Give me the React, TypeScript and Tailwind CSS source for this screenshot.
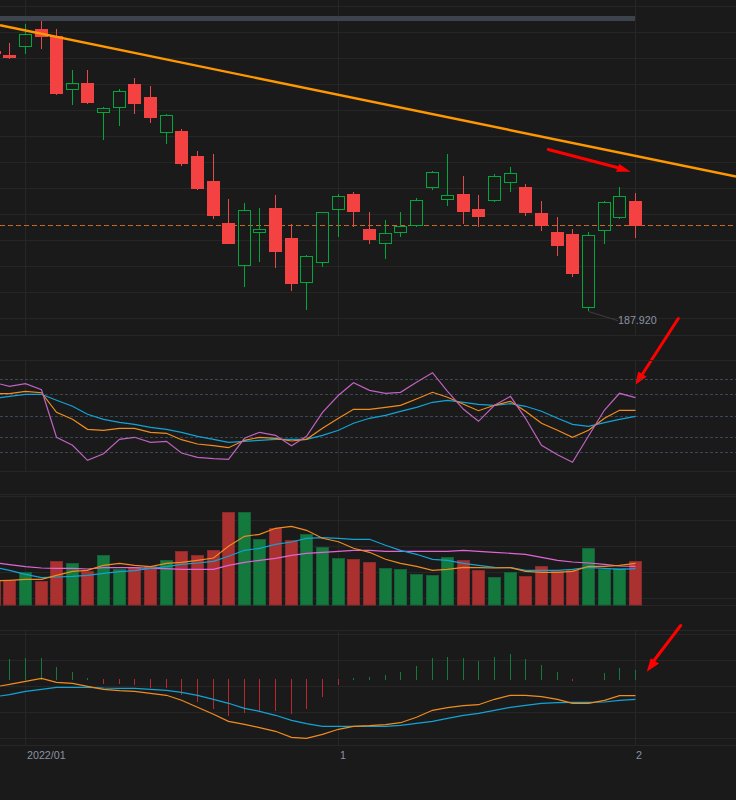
const snap = (v: number) => Math.floor(v) + 0.5;

const XS = [
  -5.3, 9.3, 25.3, 41.3, 56.3, 72.3, 87.3, 103.3, 119.3, 134.3, 150.3, 166.3, 181.3, 197.3, 213.3, 228.3, 244.3, 259.3, 275.3, 291.3, 306.3,
  322.3, 338.3, 353.3, 369.3, 385.3, 400.3, 416.3, 432.3, 447.3, 463.3, 478.3, 494.3, 510.3, 525.3, 541.3, 557.3, 572.3, 588.3, 604.3, 619.3, 635.3,
].map(snap);

// x, wickTop, wickBottom, bodyTop, bodyBottom, up (page px)
const CANDLES: [number, number, number, number, number, boolean][] = [
  [-5.3, 47, 58, 51, 54, false],
  [9.3, 43, 59, 55, 58, false],
  [25.3, 24, 54, 34.3, 46.7, true],
  [41.3, 20, 49, 29, 37, false],
  [56.3, 29, 95, 36, 94, false],
  [72.3, 70, 105, 83.3, 89.7, true],
  [87.3, 70, 104, 83, 103, false],
  [103.3, 107, 140, 108.3, 112.7, true],
  [119.3, 89, 126, 91.3, 107.7, true],
  [134.3, 78, 114, 84, 104, false],
  [150.3, 86, 123, 97, 118, false],
  [166.3, 114, 144, 115.3, 132.7, true],
  [181.3, 129, 166, 131, 164, false],
  [197.3, 151, 190, 156, 189, false],
  [213.3, 154, 219, 181, 216, false],
  [228.3, 199, 244, 223, 244, false],
  [244.3, 203, 287, 210.3, 265.7, true],
  [259.3, 208, 262, 229.3, 232.7, true],
  [275.3, 195, 268, 208, 252, false],
  [291.3, 224, 291, 238, 284, false],
  [306.3, 255, 310, 256.3, 282.7, true],
  [322.3, 212, 267, 212.3, 262.7, true],
  [338.3, 194, 237, 196.3, 209.7, true],
  [353.3, 192, 227, 194, 212, false],
  [369.3, 212, 244, 229, 240, false],
  [385.3, 220, 259, 233.3, 243.7, true],
  [400.3, 212, 237, 226.3, 232.7, true],
  [416.3, 198, 227, 200.3, 225.7, true],
  [432.3, 171, 190, 172.3, 187.7, true],
  [447.3, 154, 206, 195.3, 199.7, true],
  [463.3, 176, 224, 194, 212, false],
  [478.3, 195, 227, 209, 217, false],
  [494.3, 174, 202, 176.3, 200.7, true],
  [510.3, 167, 192, 173.3, 182.7, true],
  [525.3, 184, 216, 187, 213, false],
  [541.3, 201, 231, 213, 226, false],
  [557.3, 217, 256, 232, 246, false],
  [572.3, 229, 277, 234, 274, false],
  [588.3, 232, 311, 235.3, 307.7, true],
  [604.3, 201, 244, 202.3, 230.7, true],
  [619.3, 187, 219, 196.3, 217.7, true],
  [635.3, 193, 238, 201, 226, false],
];

const MAIN_GRID = [6.5, 32.5, 58.5, 84.5, 110.5, 136.5, 162.5, 188.5, 214.5, 240.5, 266.5, 292.5, 318.5, 335.5];

// y values for the panels, one per candle from XS index 1
const OSC_PURPLE = [386.3, 383.7, 389.7, 437.3, 445.3, 460.3, 453.7, 439.3, 437.3, 442.3, 441.3, 453, 457.3, 458.7, 459.3, 438.3, 432.3, 435.3, 445.7, 436.3, 412.3, 395.3, 382.7, 390.3, 393.3, 392.3, 382.3, 372.7, 391.3, 409.3, 421.3, 405.3, 396.3, 418.3, 445.3, 454.7, 462.3, 436, 410, 393.3, 397.7];
const OSC_ORANGE = [393.7, 391.3, 392.7, 412.3, 419.3, 429.3, 430.3, 428.3, 428.3, 432.3, 433.3, 439.7, 444, 445.7, 447.7, 440.3, 437.3, 438.3, 441, 439.3, 428.3, 418.3, 409.3, 409.3, 407.3, 405.3, 399, 392.3, 397.3, 404.3, 410.7, 405.3, 401.3, 411.3, 423.3, 430.3, 437.3, 430.3, 418.3, 410.3, 410.3];
const OSC_BLUE = [396.3, 394.3, 394.3, 400.3, 406.3, 414.3, 419.3, 422.3, 424.3, 427.3, 429.3, 432.3, 436.3, 439.3, 442.3, 441.3, 440.3, 439.3, 439.3, 439.3, 435.3, 430.3, 423.3, 418.3, 415.3, 411.3, 407.3, 402.3, 400.3, 402.3, 404.3, 405.3, 403.7, 406.3, 411.3, 418.3, 424.3, 426.3, 422.7, 419.3, 416.3];

const VOLUMES: [number, boolean][] = [
  [580.7, false], [580.7, false], [572.3, true], [581.3, false], [561.3, false], [563.3, true], [571.3, false], [555.3, true], [569.3, true], [567.3, false],
  [566.3, false], [560.3, true], [551.3, false], [555.3, false], [550.3, false], [512.3, false], [512.3, true], [539.3, true], [528.3, false], [540.3, false],
  [534.3, true], [547.3, true], [558.3, true], [559.3, false], [562.3, false], [568.3, true], [569.3, true], [574.3, true], [575.3, true], [557.3, true],
  [560.3, false], [570.3, false], [577.3, true], [572.3, true], [576.3, false], [566.3, false], [571.3, false], [570.3, false], [548.3, true], [569.3, true], [568.3, true], [561.3, false],
];
const VOL_ORANGE = [580.3, 579.3, 579.3, 575.3, 571.3, 570.3, 565.3, 563.3, 565.3, 566.7, 563.3, 562.3, 560.3, 558, 546.3, 536.3, 534.3, 528.3, 526.3, 530.3, 538.3, 541.7, 548.3, 552.3, 559.3, 563.3, 566.3, 570.3, 569.3, 567.3, 567.7, 568, 567.7, 571.3, 572.3, 572.3, 571.3, 566.3, 566.3, 565.3, 563.3];
const VOL_BLUE = [570.3, 574.3, 577.7, 577, 576.3, 575.3, 573.3, 571.7, 570.7, 568.3, 566.7, 564.3, 563, 561.3, 556.3, 550.3, 548.3, 544.3, 542, 538.3, 537.7, 538.3, 539.3, 539.3, 545.3, 550.3, 554.3, 559.3, 560.3, 563.3, 565.3, 567.3, 567.7, 570.3, 570.3, 570.3, 569.3, 567.3, 568.3, 569.3, 568.7];
const VOL_PINK = [564.7, 566.7, 568, 568.3, 568.3, 569, 567.7, 567.7, 567.7, 568.3, 568.7, 569.3, 569.3, 569.3, 565.3, 562.3, 560.3, 558.3, 555.3, 553.3, 552.3, 551.3, 550.3, 550.3, 551.3, 551.3, 551.3, 551.3, 551.3, 550.3, 551.3, 552.3, 553.3, 554.3, 557.3, 560.3, 562, 563, 564.3, 566, 566.3];

// top, bottom of each histogram bar, up flag
const MACD_BARS: [number, number, boolean][] = [
  [659, 680, true], [658, 680, true], [658, 680, true], [667, 680, true], [672, 680, true], [678, 680, true], [679, 684, false], [679, 684, false], [679, 685, false],
  [679, 688, false], [679, 688, false], [679, 695, false], [679, 702, false], [679, 709, false], [679, 716, false], [679, 713, false], [679, 711, false], [679, 711, false],
  [679, 714, false], [679, 709, false], [679, 697, false], [679, 685, false], [678, 680, true], [677, 680, true], [675, 680, true], [672, 680, true], [666, 680, true],
  [658, 680, true], [657, 680, true], [658, 680, true], [661, 680, true], [657, 680, true], [654, 680, true], [659, 680, true], [665, 680, true], [672, 680, true],
  [679, 681, false], [680, 680, true], [673, 680, true], [668, 680, true], [670, 680, true],
];
const MACD_ORANGE = [684.3, 681.3, 678.3, 682.3, 683.3, 686.3, 689.3, 690.7, 691.3, 693.3, 695.3, 700.3, 707.3, 714.3, 721.3, 724.3, 727.7, 731.3, 737.3, 738.3, 734.3, 729.3, 726.3, 725.7, 724.7, 722.7, 717.3, 710.3, 707.7, 705.7, 704.7, 699.3, 695.3, 695.3, 696.7, 699.3, 703.3, 703.3, 700.3, 695.7, 695.7];
const MACD_BLUE = [694.7, 691.3, 689.3, 687.3, 687.3, 687.3, 688, 688.3, 688.3, 689.3, 690.3, 692.3, 695.3, 699.3, 703.3, 708.3, 711.3, 715.3, 720.3, 723.7, 726.3, 726.3, 726.3, 726.3, 726.3, 725.3, 723.3, 721.3, 718.3, 715.3, 713.3, 710.3, 707.3, 705.3, 703.3, 702.7, 702.3, 702.3, 702, 700.3, 699.3];

// series start off the left edge, so prepend the value at x=0
const line = (y0: number, ys: number[]) => `0,${y0} ` + ys.map((y, i) => `${XS[i + 1]},${y}`).join(" ");

function Grid({ rows, top, bottom }: { rows: number[]; top: number; bottom: number }) {
  return (
    <g stroke="#262626" strokeWidth="1">
      {rows.map((y) => (
        <line key={y} x1="0" x2="736" y1={y} y2={y} />
      ))}
      {[25.5, 338.5, 635.5].map((x) => (
        <line key={x} x1={x} x2={x} y1={top} y2={bottom} />
      ))}
    </g>
  );
}

function Arrow({ from, to, head }: { from: string; to: string; head: string }) {
  return (
    <g>
      <polyline points={`${from} ${to}`} fill="none" stroke="#ff0000" strokeWidth="3" strokeLinecap="round" />
      <polygon points={head} fill="#ff0000" />
    </g>
  );
}

function PriceChart() {
  return (
    <svg className="block h-[360px] w-full shrink-0 overflow-visible" viewBox="0 0 736 360">
      <Grid rows={MAIN_GRID} top={0} bottom={335} />
      {/* price line */}
      <line x1="0" x2="736" y1="225.5" y2="225.5" stroke="#c8692c" strokeWidth="1" strokeDasharray="5 3" />
      {CANDLES.map(([rawX, wt, wb, bt, bb, up]) => {
        const x = snap(rawX);
        if (up) {
          const top = snap(bt);
          const bottom = snap(bb);
          return (
            <g key={x} stroke="#00a83c" strokeWidth="1">
              <line x1={x} x2={x} y1={wt} y2={top} />
              <line x1={x} x2={x} y1={bottom} y2={wb} />
              <rect x={x - 6} y={top} width="12" height={bottom - top} fill="none" />
            </g>
          );
        }
        return (
          <g key={x}>
            <line x1={x} x2={x} y1={wt} y2={wb} stroke="#e84a4a" strokeWidth="1" />
            <rect x={x - 6.5} y={bt} width="13" height={bb - bt} fill="#f44141" />
          </g>
        );
      })}
      <rect x="0" y="16" width="635" height="5" fill="#3c434d" />
      {/* trend line */}
      <line x1="0" y1="25.3" x2="736" y2="176.5" stroke="#ff9800" strokeWidth="2.4" />
      <Arrow from="548.3,149.5" to="622,168.7" head="630.7,171.7 616,171.8 619.3,164" />
      {/* low label */}
      <polyline points="588.5,311.5 618,320.7" fill="none" stroke="#3f3f3f" strokeWidth="1" />
      <text x="618" y="324" fontSize="10.7" fill="#8b93a3" fontFamily="'Liberation Sans', Arial, sans-serif">
        187.920
      </text>
      <Arrow from="678.3,318.5" to="642.5,374" head="635,385 638.3,371.5 646.7,376.7" />
    </svg>
  );
}

function Oscillator() {
  return (
    <svg className="block h-[133px] w-full shrink-0" viewBox="0 360 736 133">
      <Grid rows={[360.5, 471.5]} top={360} bottom={471} />
      <g stroke="#3d4656" strokeWidth="1" strokeDasharray="3 2">
        {[379.5, 394.5, 416.5, 437.5, 452.5].map((y) => (
          <line key={y} x1="0" x2="736" y1={y} y2={y} />
        ))}
      </g>
      <g fill="none" strokeWidth="1.2">
        <polyline points={line(397.7, OSC_BLUE)} stroke="#12a3d6" />
        <polyline points={line(393.7, OSC_ORANGE)} stroke="#f08c1e" />
        <polyline points={line(384, OSC_PURPLE)} stroke="#bf62c0" />
      </g>
    </svg>
  );
}

function VolumeChart() {
  return (
    <svg className="block h-[137px] w-full shrink-0" viewBox="0 493 736 137">
      <Grid rows={[494.5, 496.5, 520.5, 546.5, 572.5, 598.5, 605.5]} top={496} bottom={605} />
      {VOLUMES.map(([top, up], i) => (
        <rect
          key={i}
          x={XS[i] - 6}
          y={snap(top)}
          width="12"
          height={605 - snap(top)}
          fill={up ? "#14793c" : "#ab3030"}
          stroke={up ? "#14603a" : "#862c2c"}
          strokeWidth="1"
        />
      ))}
      <g fill="none" strokeWidth="1.2">
        <polyline points={line(563.3, VOL_PINK)} stroke="#e066d6" />
        <polyline points={line(568.3, VOL_BLUE)} stroke="#12a3d6" />
        <polyline points={line(580.7, VOL_ORANGE)} stroke="#f08c1e" />
      </g>
    </svg>
  );
}

function MacdChart() {
  return (
    <svg className="block h-[116px] w-full shrink-0 overflow-visible" viewBox="0 630 736 116">
      <Grid rows={[630.5, 634.5, 660.5, 686.5, 712.5, 738.5, 745.5]} top={630} bottom={745} />
      {MACD_BARS.map(([top, bottom, up], i) =>
        bottom > top ? <rect key={i} x={XS[i + 1] - 0.5} y={top} width="1" height={bottom - top} fill={up ? "#14793c" : "#b52a2a"} /> : null,
      )}
      <g fill="none" strokeWidth="1.2">
        <polyline points={line(696, MACD_BLUE)} stroke="#12a3d6" />
        <polyline points={line(686, MACD_ORANGE)} stroke="#f08c1e" />
      </g>
      <Arrow from="680.7,625.5" to="654,660.5" head="646.8,671.8 650.7,658.3 659,663.5" />
    </svg>
  );
}

function TimeAxis() {
  return (
    <div className="relative h-[54px] w-full text-[10.7px] leading-[14px] text-[#8b93a3]">
      <span className="absolute left-[27px] top-[2px]">2022/01</span>
      <span className="absolute left-[340px] top-[2px]">1</span>
      <span className="absolute left-[636px] top-[2px]">2</span>
    </div>
  );
}

export default function App() {
  return (
    <div className="flex h-[800px] w-[736px] flex-col overflow-hidden bg-[#1a1a1a] font-['Liberation_Sans',Arial,sans-serif]">
      <PriceChart />
      <Oscillator />
      <VolumeChart />
      <MacdChart />
      <TimeAxis />
    </div>
  );
}
